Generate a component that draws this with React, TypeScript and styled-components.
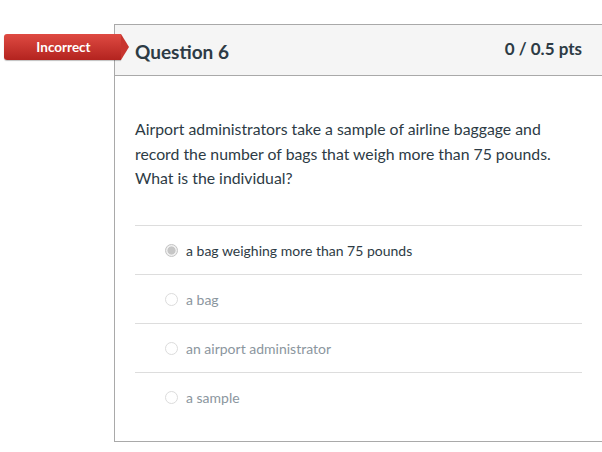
import React from 'react';
import styled, { createGlobalStyle } from 'styled-components';

const GlobalStyle = createGlobalStyle`
  html, body {
    margin: 0;
    padding: 0;
    background: #ffffff;
    overflow: hidden;
  }
  body {
    font-family: Lato, "Open Sans", "Liberation Sans", sans-serif;
    color: #2d3b45;
  }
`;

type AnswerT = {
  id: number;
  text: string;
  selected: boolean;
};

const answers: AnswerT[] = [
  { id: 1, text: 'a bag weighing more than 75 pounds', selected: true },
  { id: 2, text: 'a bag', selected: false },
  { id: 3, text: 'an airport administrator', selected: false },
  { id: 4, text: 'a sample', selected: false },
];

const Page = styled.div`
  padding: 24px 0 0 114px;
  width: 602px;
  height: 452px;
  box-sizing: border-box;
`;

const Card = styled.div`
  position: relative;
  width: 489px;
  border: 1px solid #a9a9a9;
  box-sizing: border-box;
  background: #fff;
`;

const Header = styled.div`
  display: flex;
  align-items: center;
  justify-content: space-between;
  height: 50px;
  padding: 0 20px;
  background: #f5f5f5;
  border-bottom: 1px solid #a9a9a9;
`;

const Title = styled.h2`
  margin: 3px 0 0 0;
  font-size: 19px;
  font-weight: 700;
  color: #2d3b45;
`;

const Points = styled.span`
  font-size: 17px;
  font-weight: 700;
  color: #2d3b45;
  margin-top: -4px;
`;

// red ribbon with arrow tip that sticks out of the card
const Badge = styled.div`
  position: absolute;
  left: -111px;
  top: 9px;
  width: 117px;
  height: 26px;
  display: flex;
  align-items: center;
  justify-content: center;
  padding-left: 2px;
  box-sizing: border-box;
  color: #fff;
  font-size: 13.5px;
  font-weight: 700;
  background: linear-gradient(#df4a42, #b3231f);
  border-radius: 3px 0 0 3px;
  box-shadow: 0 1px 1px rgba(0, 0, 0, 0.25);
  &::after {
    content: '';
    position: absolute;
    right: -8px;
    top: 0;
    width: 0;
    height: 0;
    border-top: 13px solid transparent;
    border-bottom: 13px solid transparent;
    border-left: 8px solid #c8352f;
  }
`;

const Body = styled.div`
  padding: 41px 20px 20px 20px;
`;

const QuestionText = styled.p`
  margin: 0 0 34px 0;
  font-size: 15.8px;
  line-height: 24.5px;
  color: #2d3b45;
`;

const AnswerList = styled.div`
  display: flex;
  flex-direction: column;
`;

const AnswerRow = styled.div`
  display: flex;
  align-items: center;
  height: 49px;
  padding-left: 30px;
  padding-top: 2px;
  box-sizing: border-box;
  border-top: 1px solid #dddddd;
`;

const Radio = styled.span<{ $checked: boolean }>`
  width: 13px;
  height: 13px;
  border-radius: 50%;
  box-sizing: border-box;
  margin-right: 8px;
  border: 1px solid ${p => (p.$checked ? '#c4c4c4' : '#dcdcdc')};
  background: ${p => (p.$checked ? 'radial-gradient(circle, #c6c6c6 0 3.8px, #efefef 4.3px)' : '#ffffff')};
`;

const AnswerLabel = styled.span<{ $checked: boolean }>`
  font-size: 14px;
  color: ${p => (p.$checked ? '#2d3b45' : '#8b969e')};
`;

const App = () => (
  <>
    <GlobalStyle />
    <Page>
      <Card>
        <Badge>Incorrect</Badge>
        <Header>
          <Title>Question 6</Title>
          <Points>0 / 0.5 pts</Points>
        </Header>
        <Body>
          <QuestionText>
            Airport administrators take a sample of airline baggage and record the number of bags that weigh more
            than 75 pounds. What is the individual?
          </QuestionText>
          <AnswerList>
            {answers.map(a => (
              <AnswerRow key={a.id}>
                <Radio $checked={a.selected} />
                <AnswerLabel $checked={a.selected}>{a.text}</AnswerLabel>
              </AnswerRow>
            ))}
          </AnswerList>
        </Body>
      </Card>
    </Page>
  </>
);

export default App;
